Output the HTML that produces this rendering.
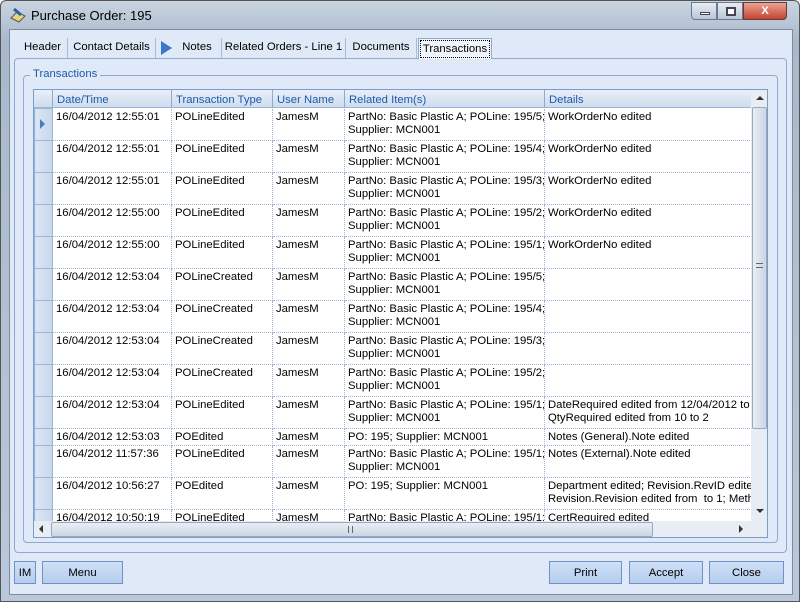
<!DOCTYPE html>
<html><head><meta charset="utf-8"><style>
*{box-sizing:border-box}
body{margin:0;width:800px;height:602px;overflow:hidden;font-family:"Liberation Sans",sans-serif;font-size:11.3px;background:#fff}
.win{position:absolute;left:0;top:0;width:800px;height:602px;background:linear-gradient(#c9d4e0,#a9b9cc 40px,#b9c8da);border:1px solid #555;border-radius:6px 6px 0 0}
.title{position:absolute;left:30px;top:7px;font-size:13px;color:#000}
.client{position:absolute;left:8px;top:28px;width:784px;height:566px;background:#dfe9f7;border:1px solid #7d8ca0}
.tab{position:absolute;top:37px;height:20px;line-height:19px;color:#000;border-right:1px solid #a6bcd8;text-align:center;white-space:nowrap}
.panel{position:absolute;left:13px;top:57px;width:773px;height:495px;border:1px solid #8eaad0;border-radius:4px;background:#dfe9f7}
.grp{position:absolute;left:22px;top:74px;width:755px;height:468px;border:1px solid #8eaad0;border-radius:4px}
.grpt{position:absolute;left:29px;top:67px;background:#dfe9f7;padding:0 3px;color:#1e5aa8}
.grid{position:absolute;left:32px;top:88px;width:735px;height:449px;background:#fff;border:1px solid #7a9cc8;overflow:hidden}
.hdr{position:absolute;left:0;top:0;width:717px;height:18px;background:linear-gradient(#e8eff9,#cfdcee);border-bottom:1px solid #9cb6d8}
.hc{position:absolute;top:0;height:18px;line-height:20px;color:#1e5aa8;padding-left:4px;border-left:1px solid #8eaad0;white-space:nowrap;overflow:hidden}
table{position:absolute;left:0;top:18px;width:717px;border-collapse:collapse;table-layout:fixed}
td{vertical-align:top;padding:2px 2px 0 3px;line-height:13px;border-right:1px dotted #9cb6d8;border-bottom:1px dotted #9cb6d8;white-space:nowrap;overflow:hidden;color:#000}
td.rh{background:linear-gradient(90deg,#dce7f5,#c6d6ec);border:1px solid #9cb6d8;padding:0}
.vs{position:absolute;left:717px;top:0;width:17px;height:431px;background:#e8edf4}
.hs{position:absolute;left:0;top:431px;width:717px;height:17px;background:#e8edf4}
.btn{position:absolute;top:560px;height:23px;background:linear-gradient(#cfe0f6,#b4cdef);border:1px solid #6f93c6;text-align:center;line-height:22px}
</style></head><body>
<div class="win">
<svg style="position:absolute;left:8px;top:5px" width="18" height="18"><path d="M2 12 L10 16 L16 10 L8 6Z" fill="#e6d67a" stroke="#555"/><path d="M5 3 L12 9" stroke="#2a5fa8" stroke-width="3"/></svg>
<div class="title">Purchase Order: 195</div>
<div style="position:absolute;left:690px;top:1px;width:26px;height:18px;border:1px solid #6a7a8c;border-radius:0 0 0 4px;background:linear-gradient(#e6ecf2,#b9c6d6)"><div style="margin:9px 8px;width:10px;height:3px;background:#fff;border:1px solid #445"></div></div>
<div style="position:absolute;left:716px;top:1px;width:26px;height:18px;border:1px solid #6a7a8c;background:linear-gradient(#e6ecf2,#b9c6d6)"><div style="margin:4px 8px;width:10px;height:9px;border:2px solid #445;background:#fff"></div></div>
<div style="position:absolute;left:742px;top:1px;width:44px;height:18px;border:1px solid #6a3a30;border-radius:0 0 4px 0;background:linear-gradient(#e8a394,#c4442e);color:#fff;text-align:center;font-weight:bold;line-height:17px">X</div>
<div class="client"></div>
<div class="panel"></div>
<div class="tab" style="left:17px;width:50px">Header</div>
<div class="tab" style="left:67px;width:88px">Contact Details</div>
<svg style="position:absolute;left:160px;top:40px" width="12" height="14"><path d="M0 0 L11 7 L0 14Z" fill="#3a78c8"/></svg>
<div class="tab" style="left:172px;width:49px">Notes</div>
<div class="tab" style="left:221px;width:124px">Related Orders - Line 1</div>
<div class="tab" style="left:345px;width:71px">Documents</div>
<div style="position:absolute;left:417px;top:37px;width:74px;height:21px;background:#f0f5fb;border:1px solid #8eaad0;border-bottom:none"><div style="margin:1px;border:1px dotted #000;height:18px;line-height:17px;text-align:center;white-space:nowrap">Transactions</div></div>
<div class="grp"></div>
<div class="grpt">Transactions</div>
<div class="grid">
<div class="hdr">
<div class="hc" style="left:18px;width:119px">Date/Time</div>
<div class="hc" style="left:137px;width:101px">Transaction Type</div>
<div class="hc" style="left:238px;width:72px">User Name</div>
<div class="hc" style="left:310px;width:200px">Related Item(s)</div>
<div class="hc" style="left:510px;width:207px">Details</div>
</div>
<table>
<colgroup><col style="width:18px"><col style="width:119px"><col style="width:101px"><col style="width:72px"><col style="width:200px"><col style="width:207px"></colgroup>
<tr style="height:32px"><td class="rh" style="position:relative"><svg style="position:absolute;left:0;top:0" width="16" height="20"><path d="M5 10 L10 15 L5 20Z" fill="#4a7cc0"/></svg></td><td>16/04/2012 12:55:01</td><td>POLineEdited</td><td>JamesM</td><td>PartNo: Basic Plastic A; POLine: 195/5;<br>Supplier: MCN001</td><td>WorkOrderNo edited</td></tr>
<tr style="height:32px"><td class="rh"></td><td>16/04/2012 12:55:01</td><td>POLineEdited</td><td>JamesM</td><td>PartNo: Basic Plastic A; POLine: 195/4;<br>Supplier: MCN001</td><td>WorkOrderNo edited</td></tr>
<tr style="height:32px"><td class="rh"></td><td>16/04/2012 12:55:01</td><td>POLineEdited</td><td>JamesM</td><td>PartNo: Basic Plastic A; POLine: 195/3;<br>Supplier: MCN001</td><td>WorkOrderNo edited</td></tr>
<tr style="height:32px"><td class="rh"></td><td>16/04/2012 12:55:00</td><td>POLineEdited</td><td>JamesM</td><td>PartNo: Basic Plastic A; POLine: 195/2;<br>Supplier: MCN001</td><td>WorkOrderNo edited</td></tr>
<tr style="height:32px"><td class="rh"></td><td>16/04/2012 12:55:00</td><td>POLineEdited</td><td>JamesM</td><td>PartNo: Basic Plastic A; POLine: 195/1;<br>Supplier: MCN001</td><td>WorkOrderNo edited</td></tr>
<tr style="height:32px"><td class="rh"></td><td>16/04/2012 12:53:04</td><td>POLineCreated</td><td>JamesM</td><td>PartNo: Basic Plastic A; POLine: 195/5;<br>Supplier: MCN001</td><td></td></tr>
<tr style="height:32px"><td class="rh"></td><td>16/04/2012 12:53:04</td><td>POLineCreated</td><td>JamesM</td><td>PartNo: Basic Plastic A; POLine: 195/4;<br>Supplier: MCN001</td><td></td></tr>
<tr style="height:32px"><td class="rh"></td><td>16/04/2012 12:53:04</td><td>POLineCreated</td><td>JamesM</td><td>PartNo: Basic Plastic A; POLine: 195/3;<br>Supplier: MCN001</td><td></td></tr>
<tr style="height:32px"><td class="rh"></td><td>16/04/2012 12:53:04</td><td>POLineCreated</td><td>JamesM</td><td>PartNo: Basic Plastic A; POLine: 195/2;<br>Supplier: MCN001</td><td></td></tr>
<tr style="height:32px"><td class="rh"></td><td>16/04/2012 12:53:04</td><td>POLineEdited</td><td>JamesM</td><td>PartNo: Basic Plastic A; POLine: 195/1;<br>Supplier: MCN001</td><td>DateRequired edited from 12/04/2012 to 2<br>QtyRequired edited from 10 to 2</td></tr>
<tr style="height:17px"><td class="rh"></td><td>16/04/2012 12:53:03</td><td>POEdited</td><td>JamesM</td><td>PO: 195; Supplier: MCN001</td><td>Notes (General).Note edited</td></tr>
<tr style="height:32px"><td class="rh"></td><td>16/04/2012 11:57:36</td><td>POLineEdited</td><td>JamesM</td><td>PartNo: Basic Plastic A; POLine: 195/1;<br>Supplier: MCN001</td><td>Notes (External).Note edited</td></tr>
<tr style="height:32px"><td class="rh"></td><td>16/04/2012 10:56:27</td><td>POEdited</td><td>JamesM</td><td>PO: 195; Supplier: MCN001</td><td>Department edited; Revision.RevID edited<br>Revision.Revision edited from &nbsp;to 1; Method</td></tr>
<tr style="height:32px"><td class="rh"></td><td>16/04/2012 10:50:19</td><td>POLineEdited</td><td>JamesM</td><td>PartNo: Basic Plastic A; POLine: 195/1;</td><td>CertRequired edited</td></tr>
</table>
<div class="vs">
<div style="position:absolute;left:5px;top:6px;border-left:4px solid transparent;border-right:4px solid transparent;border-bottom:4px solid #333;width:0;height:0"></div>
<div style="position:absolute;left:1px;top:17px;width:15px;height:322px;background:linear-gradient(90deg,#e9eef5,#cbd6e4);border:1px solid #99a8bc;border-radius:2px"><div style="position:absolute;left:3px;top:155px;width:7px;height:5px;border-top:1px solid #666;border-bottom:1px solid #666"></div></div>
<div style="position:absolute;left:5px;top:419px;border-left:4px solid transparent;border-right:4px solid transparent;border-top:4px solid #333;width:0;height:0"></div>
</div>
<div class="hs">
<div style="position:absolute;left:5px;top:4px;border-top:4px solid transparent;border-bottom:4px solid transparent;border-right:4px solid #333;width:0;height:0"></div>
<div style="position:absolute;left:17px;top:1px;width:602px;height:15px;background:linear-gradient(#e9eef5,#cbd6e4);border:1px solid #99a8bc;border-radius:2px"><div style="position:absolute;left:296px;top:3px;width:5px;height:7px;border-left:1px solid #666;border-right:1px solid #666"></div></div>
<div style="position:absolute;left:705px;top:4px;border-top:4px solid transparent;border-bottom:4px solid transparent;border-left:4px solid #333;width:0;height:0"></div>
</div>
<div style="position:absolute;left:717px;top:431px;width:17px;height:17px;background:#e8edf4"></div>
</div>
<div class="btn" style="left:13px;width:22px">IM</div>
<div class="btn" style="left:41px;width:81px">Menu</div>
<div class="btn" style="left:548px;width:73px">Print</div>
<div class="btn" style="left:628px;width:74px">Accept</div>
<div class="btn" style="left:708px;width:75px">Close</div>
</div>
</body></html>
